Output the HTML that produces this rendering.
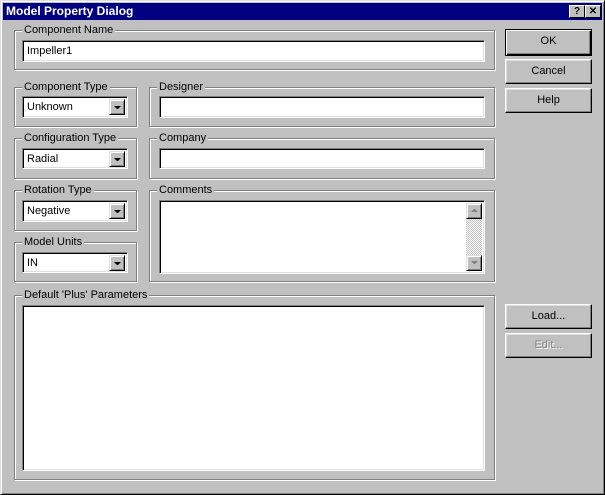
<!DOCTYPE html>
<html><head><style>
*{margin:0;padding:0;box-sizing:border-box}
body{width:605px;height:495px;background:#c0c0c0;font-family:"Liberation Sans",Arial,sans-serif;font-size:11px;color:#000;position:relative;overflow:hidden}
.win{position:absolute;left:0;top:0;width:605px;height:495px;border:1px solid;border-color:#dfdfdf #000 #000 #dfdfdf;box-shadow:inset 1px 1px #fff,inset -1px -1px #808080}
.title{position:absolute;left:3px;top:3px;width:599px;height:17px;background:#000080;color:#fff;font-weight:bold;font-size:12px;line-height:16px;padding-left:3px}
.tb{position:absolute;top:2px;width:16px;height:13px;background:#c0c0c0;border:1px solid;border-color:#fff #000 #000 #fff;color:#000;font-size:10px;line-height:11px;text-align:center;font-weight:bold}
.g{position:absolute;border:1px solid #808080;box-shadow:1px 1px #fff,inset 1px 1px #fff}
.g span{position:absolute;left:7px;top:-8px;background:#c0c0c0;padding:0 2px;line-height:14px;white-space:nowrap}
.e{position:absolute;background:#fff;border:1px solid;border-color:#808080 #fff #fff #808080;box-shadow:inset 1px 1px #000,inset -1px -1px #dfdfdf;padding:4px 4px 3px;line-height:13px}
.dd{position:absolute;right:2px;top:2px;width:16px;height:16px;background:#c0c0c0;border:1px solid;border-color:#dfdfdf #000 #000 #dfdfdf;box-shadow:inset 1px 1px #fff,inset -1px -1px #808080}
.dd:after{content:"";position:absolute;left:4px;top:6px;border-left:3px solid transparent;border-right:3px solid transparent;border-top:3px solid #000;width:1px}
.b{position:absolute;left:505px;width:87px;height:25px;border:1px solid;border-color:#fff #000 #000 #fff;box-shadow:inset -1px -1px #808080,inset 1px 1px #dfdfdf;text-align:center;line-height:22px}
.sb{position:absolute;right:2px;top:2px;bottom:2px;width:16px;background:repeating-conic-gradient(#c0c0c0 0 25%,#fff 0 50%) 0 0/2px 2px}
.sa{position:absolute;left:0;width:16px;height:16px;background:#c0c0c0;border:1px solid;border-color:#dfdfdf #000 #000 #dfdfdf;box-shadow:inset 1px 1px #fff,inset -1px -1px #808080}
.sa:after{content:"";position:absolute;left:4px;top:5px;border-left:3px solid transparent;border-right:3px solid transparent;width:1px}
.up:after{border-bottom:3px solid #808080}
.dn:after{border-top:3px solid #808080}
</style></head><body>
<div class="win"></div>
<div class="title">Model Property Dialog
<div class="tb" style="left:566px">?</div><div class="tb" style="left:582px">✕</div></div>

<div class="g" style="left:14px;top:30px;width:481px;height:40px"><span>Component Name</span></div>
<div class="e" style="left:22px;top:40px;width:463px;height:22px">Impeller1</div>

<div class="g" style="left:14px;top:87px;width:123px;height:40px"><span>Component Type</span></div>
<div class="e" style="left:22px;top:96px;width:106px;height:22px">Unknown<div class="dd"></div></div>
<div class="g" style="left:149px;top:87px;width:346px;height:40px"><span>Designer</span></div>
<div class="e" style="left:159px;top:96px;width:326px;height:22px"></div>

<div class="g" style="left:14px;top:138px;width:123px;height:41px"><span>Configuration Type</span></div>
<div class="e" style="left:22px;top:148px;width:106px;height:21px">Radial<div class="dd"></div></div>
<div class="g" style="left:149px;top:138px;width:346px;height:41px"><span>Company</span></div>
<div class="e" style="left:159px;top:148px;width:326px;height:21px"></div>

<div class="g" style="left:14px;top:190px;width:123px;height:41px"><span>Rotation Type</span></div>
<div class="e" style="left:22px;top:200px;width:106px;height:22px">Negative<div class="dd"></div></div>
<div class="g" style="left:149px;top:190px;width:346px;height:92px"><span>Comments</span></div>
<div class="e" style="left:159px;top:200px;width:326px;height:74px"><div class="sb"><div class="sa up" style="top:0"></div><div class="sa dn" style="bottom:0"></div></div></div>

<div class="g" style="left:14px;top:242px;width:123px;height:40px"><span>Model Units</span></div>
<div class="e" style="left:22px;top:252px;width:106px;height:21px">IN<div class="dd"></div></div>

<div class="g" style="left:14px;top:295px;width:481px;height:185px"><span>Default 'Plus' Parameters</span></div>
<div class="e" style="left:22px;top:305px;width:463px;height:166px"></div>

<div class="b" style="top:29px;height:27px;border:1px solid #000;box-shadow:inset 1px 1px #fff,inset -1px -1px #000,inset -2px -2px #808080">OK</div>
<div class="b" style="top:59px">Cancel</div>
<div class="b" style="top:88px">Help</div>
<div class="b" style="top:304px">Load...</div>
<div class="b" style="top:333px;color:#808080;text-shadow:1px 1px #fff">Edit...</div>
</body></html>
